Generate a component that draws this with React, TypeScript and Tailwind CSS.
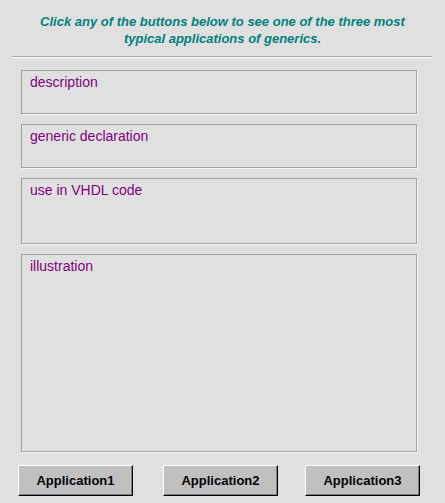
import React from "react";

const Box = ({ label, h }: { label: string; h: string }) => (
  <div className={`ml-[21px] w-[396px] ${h} border border-[#a4a4a4] shadow-[1px_1px_0_#f4f4f4] pl-[8px] pt-[3px] text-[14px] leading-[17px] text-[#800080]`}>
    {label}
  </div>
);

const Btn = ({ label, cls }: { label: string; cls: string }) => (
  <button className={`${cls} w-[115px] h-[31px] bg-[#c0c0c0] border border-t-white border-l-white border-r-black border-b-black shadow-[inset_-1px_-1px_0_#808080] text-[13px] font-bold text-black`}>
    {label}
  </button>
);

export default function App() {
  return (
    <div
      className="w-[445px] h-[503px] bg-[#e0e0e0] flex flex-col"
      style={{ fontFamily: '"Liberation Sans", Arial, sans-serif' }}
    >
      <div className="pt-[13px] text-center text-[13px] leading-[17px] font-bold italic text-[#008080]">
        Click any of the buttons below to see one of the three most
        <br />
        typical applications of generics.
      </div>
      <div className="mx-[12px] mt-[9px] h-[2px] border-t border-t-[#a8a8a8] border-b border-b-white w-[420px]" />
      <div className="mt-[12px] flex flex-col gap-[10px]">
        <Box label="description" h="h-[44px]" />
        <Box label="generic declaration" h="h-[44px]" />
        <Box label="use in VHDL code" h="h-[66px]" />
        <Box label="illustration" h="h-[198px]" />
      </div>
      <div className="mt-[13px] flex">
        <Btn label="Application1" cls="ml-[18px]" />
        <Btn label="Application2" cls="ml-[30px]" />
        <Btn label="Application3" cls="ml-[27px]" />
      </div>
    </div>
  );
}
